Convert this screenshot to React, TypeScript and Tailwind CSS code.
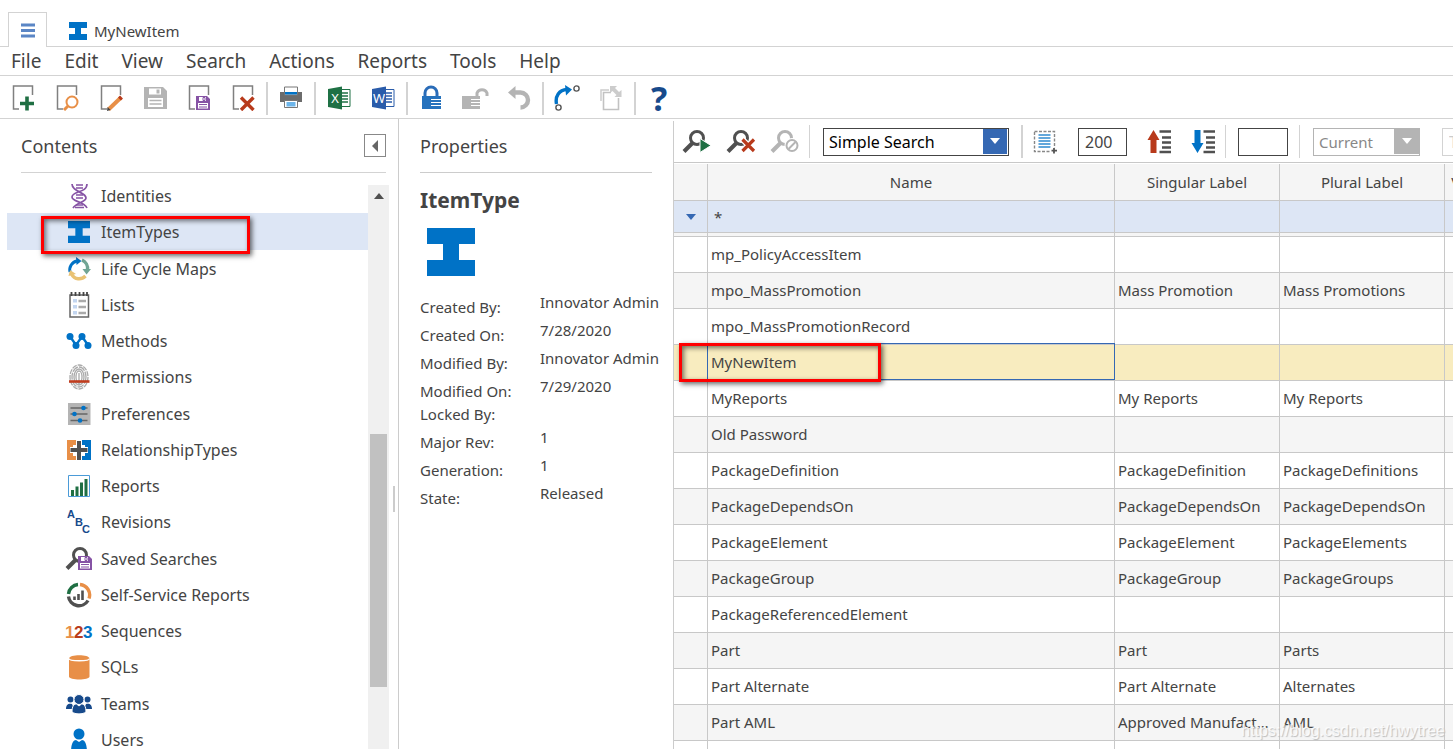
import type { ReactNode } from 'react'

function Svg({ children, w = 24, h = 26 }: { children: ReactNode; w?: number; h?: number }) {
  return (
    <svg width={w} height={h} viewBox={`0 0 ${w} ${h}`} fill="none" aria-hidden="true" className="shrink-0">
      {children}
    </svg>
  )
}

function Page() {
  return <path d="M21.5 10V1H2.5V24H8" stroke="#808080" strokeWidth="1.5" />
}

function Floppy({ color }: { color: string }) {
  return (
    <g>
      <path d="M9 11h11l3 3v11H9z" fill={color} />
      <path d="M12 12h7v4h-7zM11 18h10v5.5H11z" fill="#fff" />
      <path d="M16 12.5h2v3h-2zM12 19.5h8M12 22h8" stroke={color} strokeWidth="1" />
    </g>
  )
}

function Magnifier({ color = '#505050' }: { color?: string }) {
  return (
    <g stroke={color}>
      <circle cx="15" cy="9" r="6.5" strokeWidth="3" />
      <path d="M10.5 14L2 22.5" strokeWidth="4" />
    </g>
  )
}

const NewIcon = () => (
  <Svg>
    <Page />
    <path d="M16 11.5v14M9 18.5h14" stroke="#1f6f43" strokeWidth="3.6" />
  </Svg>
)

const FindIcon = () => (
  <Svg>
    <Page />
    <circle cx="17" cy="17" r="5.5" stroke="#e88f47" strokeWidth="2" />
    <path d="M13 21L9 25" stroke="#e88f47" strokeWidth="3" />
  </Svg>
)

const EditIcon = () => (
  <Svg>
    <Page />
    <path d="M9.5 24.5L22 12.5" stroke="#e88f47" strokeWidth="4" />
    <path d="M20.5 14L22.5 12" stroke="#b83a1b" strokeWidth="4" />
    <path d="M8 26l.6-4 3 3z" fill="#444" />
  </Svg>
)

const SaveIcon = () => (
  <Svg>
    <path d="M1 2h19l4 4v18H1z" fill="#b4b4b4" />
    <path d="M6 3.5h12v6H6zM5 13h15v9H5z" fill="#fff" />
    <path d="M13.5 4.5h3v4h-3z" fill="#b4b4b4" />
    <path d="M6.5 15.5h12M6.5 19h12" stroke="#b4b4b4" strokeWidth="1.5" />
  </Svg>
)

const SaveCloseIcon = () => (
  <Svg>
    <Page />
    <Floppy color="#8653a5" />
  </Svg>
)

const DeleteIcon = () => (
  <Svg>
    <Page />
    <path d="M10 12.5L22.5 25M22.5 12.5L10 25" stroke="#b83a1b" strokeWidth="3.4" />
  </Svg>
)

const PrintIcon = () => (
  <Svg>
    <path d="M1 7h4v3h14V7h4v10H1z" fill="#6c6c6c" />
    <path d="M5.5 2h13v8h-13z" fill="#fff" stroke="#777" />
    <path d="M6 7h12v2.5H6z" fill="#0072c6" />
    <path d="M5.5 15.5h13v7h-13z" fill="#fff" stroke="#777" />
    <path d="M7.5 17h9v4.5h-9z" fill="#6cb5ea" />
  </Svg>
)

function OfficeIcon({ letter, color }: { letter: string; color: string }) {
  return (
    <Svg>
      <path d="M13 4.5h10v17H13z" stroke={color} fill="#fff" />
      <path d="M15 8h6M15 11h6M15 14h6M15 17h6" stroke={color} strokeWidth="1.6" />
      <path d="M1 4l14-2.5v23L1 22z" fill={color} />
      <text x="8" y="18" textAnchor="middle" fontSize="13" fill="#fff" fontFamily="Noto Sans, sans-serif">
        {letter}
      </text>
    </Svg>
  )
}

const LockIcon = () => (
  <Svg>
    <path d="M6 12V8a6 6 0 0 1 12 0v4" stroke="#2a6cb8" strokeWidth="3" />
    <path d="M3 11h19v13H3z" fill="#2672bd" />
    <path d="M12 14.5h10M12 17.5h10M12 20.5h10" stroke="#fff" strokeWidth="1.1" />
  </Svg>
)

const UnlockIcon = () => (
  <Svg w={28}>
    <path d="M16 12V8a5.5 5.5 0 0 1 10 0v3" stroke="#b4b4b4" strokeWidth="3" />
    <path d="M1 11h18v13H1z" fill="#b4b4b4" />
    <path d="M10 14.5h9M10 17.5h9M10 20.5h9" stroke="#fff" strokeWidth="1.1" />
  </Svg>
)

const UndoIcon = () => (
  <Svg>
    <path d="M1 7.5L8.5 1v13z" fill="#b4b4b4" />
    <path d="M7 7.5h6.5a7.5 7.5 0 0 1 0 15" stroke="#b4b4b4" strokeWidth="4.4" />
  </Svg>
)

const PromoteIcon = () => (
  <Svg w={26}>
    <path d="M2.5 19C1 11 5 5 13 4.5" stroke="#0072c6" strokeWidth="3.4" />
    <path d="M11 0l7 4.5-6 6z" fill="#0072c6" />
    <circle cx="22.5" cy="3.5" r="2.6" stroke="#555" strokeWidth="1.4" />
    <circle cx="4.5" cy="22.5" r="2.6" stroke="#555" strokeWidth="1.4" />
  </Svg>
)

const CopyIcon = () => (
  <Svg>
    <path d="M2 16V5h8" stroke="#ccc" strokeWidth="1.5" />
    <path d="M12 7.5H4.5v17h15V13" stroke="#c2c2c2" strokeWidth="1.6" />
    <path d="M11 1h7l-2 2 4 4 2.5-2v7h-7l2-2-4-4-2.5 2z" fill="#ccc" />
  </Svg>
)

const HelpIcon = () => <span className="text-[34px] font-bold leading-[42px] text-[#174a8b]">?</span>

const RunSearchIcon = () => (
  <Svg w={30}>
    <Magnifier />
    <path d="M18 9.5v14l11-7z" fill="#1f6f43" stroke="#fff" />
  </Svg>
)

const ClearSearchIcon = () => (
  <Svg w={30}>
    <Magnifier />
    <path d="M17 11l11 11M28 11L17 22" stroke="#fff" strokeWidth="6" />
    <path d="M16.5 10.5L28 22M28 10.5L16.5 22" stroke="#b83a1b" strokeWidth="3.2" />
  </Svg>
)

const StopSearchIcon = () => (
  <Svg w={30}>
    <Magnifier color="#b4b4b4" />
    <circle cx="22" cy="16.5" r="5.5" fill="#fff" stroke="#fff" strokeWidth="4" />
    <circle cx="22" cy="16.5" r="5.5" stroke="#b4b4b4" strokeWidth="2" />
    <path d="M18.5 20l7-7" stroke="#b4b4b4" strokeWidth="2" />
  </Svg>
)

const SelectAllIcon = () => (
  <Svg>
    <path d="M1.5 2.5h20v20h-20z" stroke="#888" strokeWidth="1.4" strokeDasharray="3 1.5" />
    <path d="M5.5 6h12M5.5 9h12M5.5 12h12M5.5 15h12M5.5 18h12" stroke="#2f8ad0" strokeWidth="1.4" />
    <path d="M17.5 18.5h8v8h-8z" fill="#fff" />
    <path d="M21 19v5.5M18.5 21.7H24" stroke="#555" strokeWidth="1.8" />
  </Svg>
)

function SortIcon({ up }: { up?: boolean }) {
  return (
    <Svg>
      {up ? (
        <path d="M6.5 1l6 10h-3v13h-6V11h-3z" fill="#b83a1b" />
      ) : (
        <path d="M6.5 24l6-10h-3V1h-6v13h-3z" fill="#0072c6" />
      )}
      <path d="M12.5 2.5H24M15 8.5h9M15 13.5h9M15 18.5h9M12.5 23H24" stroke="#505050" strokeWidth="2.4" />
    </Svg>
  )
}

function ItemTypeIcon({ size }: { size: number }) {
  return (
    <svg width={size} height={size} viewBox="0 0 24 24" aria-hidden="true" className="shrink-0">
      <path d="M0 0h24v8h-8v8h8v8H0v-8h8V8H0z" fill="#0072c6" />
    </svg>
  )
}

const treeItems: { label: string; icon: ReactNode }[] = [
  {
    label: 'Identities',
    icon: (
      <Svg>
        <path d="M5 1c0 8 14 8 14 14 0 4-9 4-13 10M20 1c0 9-15 7-15 13 0 5 12 4 15 11" stroke="#8653a5" strokeWidth="1.7" />
        <path d="M9 2h7M9 5h7M9 12h7M9 15h7M9 22h7M8 24.5h9" stroke="#8653a5" strokeWidth="1.3" />
      </Svg>
    ),
  },
  { label: 'ItemTypes', icon: <ItemTypeIcon size={22} /> },
  {
    label: 'Life Cycle Maps',
    icon: (
      <Svg>
        <path d="M3 16a9 9 0 0 1 7-11" stroke="#0072c6" strokeWidth="3" />
        <path d="M9 1l5.5 4-5 4z" fill="#0072c6" />
        <path d="M15 4a9.5 9.5 0 0 1 5.5 10" stroke="#71a594" strokeWidth="3.4" />
        <path d="M15.5 13H24l-4.5 5.5z" fill="#71a594" />
        <path d="M4.5 18c3 6 10 6 14 2" stroke="#e9c273" strokeWidth="3.4" />
        <path d="M1.5 20L3 14l6 4z" fill="#e9c273" />
      </Svg>
    ),
  },
  {
    label: 'Lists',
    icon: (
      <Svg>
        <path d="M3 3h18.5v22H3z" stroke="#666" strokeWidth="1.5" />
        <path d="M4.5 0v4M8.5 0v4M12.5 0v4M16.5 0v4M20 0v4" stroke="#444" strokeWidth="1.8" />
        <path d="M6 7h4v3.5H6zM6 13h4v3.5H6zM6 19h4v3.5H6z" fill="#c3d6f0" />
        <path d="M11.5 9H19M11.5 15H19M11.5 21H19" stroke="#aaa" strokeWidth="2.4" />
      </Svg>
    ),
  },
  {
    label: 'Methods',
    icon: (
      <Svg w={26}>
        <path d="M4 8.5l6 8.5 6-8.5 6 8.5" stroke="#0072c6" strokeWidth="2.4" />
        <g fill="#0072c6">
          <circle cx="4" cy="8.5" r="3.5" />
          <circle cx="10" cy="17.5" r="3.5" />
          <circle cx="16" cy="8.5" r="3.5" />
          <circle cx="22" cy="17.5" r="3.5" />
        </g>
      </Svg>
    ),
  },
  {
    label: 'Permissions',
    icon: (
      <Svg>
        <g stroke="#aaa" strokeWidth="1.3">
          <ellipse cx="12" cy="13" rx="9" ry="12" strokeDasharray="5 1" />
          <ellipse cx="12" cy="13" rx="7" ry="10" strokeDasharray="7 1" />
          <ellipse cx="12" cy="13" rx="5" ry="8" />
          <ellipse cx="12" cy="13" rx="3" ry="6" />
          <path d="M12 9v12" />
        </g>
        <path d="M2 17.5h20.5" stroke="#c03d1e" strokeWidth="2.6" />
      </Svg>
    ),
  },
  {
    label: 'Preferences',
    icon: (
      <Svg>
        <path d="M1 2h22.5v22H1z" fill="#b4b4b4" />
        <path d="M3.5 7h17M3.5 13h17M3.5 19.5h17" stroke="#666" strokeWidth="1.4" />
        <g fill="#0072c6">
          <circle cx="16.5" cy="7" r="2.3" />
          <circle cx="7.5" cy="13" r="2.3" />
          <circle cx="13" cy="19.5" r="2.3" />
        </g>
      </Svg>
    ),
  },
  {
    label: 'RelationshipTypes',
    icon: (
      <Svg w={26}>
        <path d="M1 3h11v5H7v11h5v4H1z" fill="#e88f47" />
        <path d="M14 3h11v20H14v-4h5V8h-5z" fill="#0072c6" />
        <path d="M13 3v20M4 13h18" stroke="#fff" strokeWidth="6" />
        <path d="M13 4v19M4.5 13h17" stroke="#505050" strokeWidth="4" />
      </Svg>
    ),
  },
  {
    label: 'Reports',
    icon: (
      <Svg>
        <path d="M1.5 2.5h21v21h-21z" stroke="#4b9bd8" />
        <path d="M5.5 17v6M10 13.5V23M14.5 9.5V23M19 6v17" stroke="#1f6f43" strokeWidth="3" />
      </Svg>
    ),
  },
  {
    label: 'Revisions',
    icon: (
      <Svg>
        <g fill="#174a8b" fontSize="11" fontWeight="bold" fontFamily="Liberation Sans, Arial, sans-serif">
          <text x="0" y="9">A</text>
          <text x="8" y="17">B</text>
          <text x="15" y="24">C</text>
        </g>
      </Svg>
    ),
  },
  {
    label: 'Saved Searches',
    icon: (
      <Svg w={28}>
        <Magnifier />
        <path d="M13 11h14v14H13z" fill="#fff" />
        <g transform="translate(4 -1)">
          <Floppy color="#8653a5" />
        </g>
      </Svg>
    ),
  },
  {
    label: 'Self-Service Reports',
    icon: (
      <Svg w={26}>
        <path d="M2.5 12A10.5 10.5 0 0 1 12 2.5" stroke="#1f6f43" strokeWidth="3.4" />
        <path d="M14 2.5a10.5 10.5 0 0 1 9 14" stroke="#e88f47" strokeWidth="3.4" />
        <path d="M2.5 14.5A10.5 10.5 0 0 0 22 18.5" stroke="#505050" strokeWidth="3.4" />
        <path d="M8.5 14.5V18M12.5 12v6M16.5 8.5V18" stroke="#505050" strokeWidth="2.6" />
      </Svg>
    ),
  },
  {
    label: 'Sequences',
    icon: (
      <Svg w={28}>
        <g fontSize="17" fontWeight="bold" fontFamily="Liberation Sans, Arial, sans-serif">
          <text x="0" y="20" fill="#e88f47">1</text>
          <text x="9" y="20" fill="#b83a1b">2</text>
          <text x="18" y="20" fill="#0072c6">3</text>
        </g>
      </Svg>
    ),
  },
  {
    label: 'SQLs',
    icon: (
      <Svg>
        <path d="M2 4.5C2 0 22.5 0 22.5 4.5v18c0 4-20.5 4-20.5 0z" fill="#e88f47" />
        <path d="M2 4.5c0 3 20.5 3 20.5 0" stroke="#fff" strokeWidth="1.4" />
      </Svg>
    ),
  },
  {
    label: 'Teams',
    icon: (
      <Svg w={26}>
        <g fill="#174a8b">
          <circle cx="4.5" cy="8.5" r="3" />
          <circle cx="21.5" cy="8.5" r="3" />
          <path d="M0 18c0-5 3-6 6-5l2 5zM26 18c0-5-3-6-6-5l-2 5z" />
          <circle cx="13" cy="8.5" r="5" stroke="#fff" />
          <path d="M6 21c0-6 2-8 4.5-8l2.5 2 2.5-2c2.5 0 4.5 2 4.5 8-3 2.5-11 2.5-14 0z" stroke="#fff" />
        </g>
      </Svg>
    ),
  },
  {
    label: 'Users',
    icon: (
      <Svg>
        <circle cx="12" cy="7" r="5.5" fill="#0072c6" />
        <path d="M4 26c0-9 2-13 5-13l3 2 3-2c3 0 5 4 5 13z" fill="#0072c6" />
      </Svg>
    ),
  },
]

const menus = ['File', 'Edit', 'View', 'Search', 'Actions', 'Reports', 'Tools', 'Help']

const toolGroups: { label: string; icon: ReactNode }[][] = [
  [
    { label: 'New', icon: <NewIcon /> },
    { label: 'Open', icon: <FindIcon /> },
    { label: 'Edit item', icon: <EditIcon /> },
    { label: 'Save', icon: <SaveIcon /> },
    { label: 'Save and close', icon: <SaveCloseIcon /> },
    { label: 'Delete', icon: <DeleteIcon /> },
  ],
  [{ label: 'Print', icon: <PrintIcon /> }],
  [
    { label: 'Export to Excel', icon: <OfficeIcon letter="X" color="#1f7145" /> },
    { label: 'Export to Word', icon: <OfficeIcon letter="W" color="#2a5caa" /> },
  ],
  [
    { label: 'Lock', icon: <LockIcon /> },
    { label: 'Unlock', icon: <UnlockIcon /> },
    { label: 'Undo', icon: <UndoIcon /> },
  ],
  [
    { label: 'Promote', icon: <PromoteIcon /> },
    { label: 'Copy', icon: <CopyIcon /> },
  ],
  [{ label: 'Help topics', icon: <HelpIcon /> }],
]

const properties = [
  ['Created By:', 'Innovator Admin'],
  ['Created On:', '7/28/2020'],
  ['Modified By:', 'Innovator Admin'],
  ['Modified On:', '7/29/2020'],
  ['Locked By:', ''],
  ['Major Rev:', '1'],
  ['Generation:', '1'],
  ['State:', 'Released'],
]

const rows = [
  ['mp_PolicyAccessItem', '', ''],
  ['mpo_MassPromotion', 'Mass Promotion', 'Mass Promotions'],
  ['mpo_MassPromotionRecord', '', ''],
  ['MyNewItem', '', ''],
  ['MyReports', 'My Reports', 'My Reports'],
  ['Old Password', '', ''],
  ['PackageDefinition', 'PackageDefinition', 'PackageDefinitions'],
  ['PackageDependsOn', 'PackageDependsOn', 'PackageDependsOn'],
  ['PackageElement', 'PackageElement', 'PackageElements'],
  ['PackageGroup', 'PackageGroup', 'PackageGroups'],
  ['PackageReferencedElement', '', ''],
  ['Part', 'Part', 'Parts'],
  ['Part Alternate', 'Part Alternate', 'Alternates'],
  ['Part AML', 'Approved Manufacturer', 'AML'],
  ['', '', ''],
]

function ToolButton({ label, children }: { label: string; children: ReactNode }) {
  return (
    <button type="button" aria-label={label} className="flex h-full w-11 shrink-0 items-center justify-center">
      {children}
    </button>
  )
}

function Separator() {
  return <span className="mx-px h-[33px] w-0.5 shrink-0 bg-[#d3d3d3]" />
}

function Header() {
  return (
    <header>
      <div className="flex h-[47px] items-end border-b border-[#d3d3d3] pl-2">
        <button
          type="button"
          aria-label="Main menu"
          className="-mb-px flex h-[35px] w-[39px] items-center justify-center border border-b-0 border-[#d3d3d3] bg-white pt-px"
        >
          <Svg w={14} h={15}>
            <path d="M0 2h14M0 7.5h14M0 13h14" stroke="#5b86c5" strokeWidth="3" />
          </Svg>
        </button>
        <button type="button" className="ml-[22px] flex h-[31px] items-center gap-[7px] text-[15px]">
          <ItemTypeIcon size={18} />
          MyNewItem
        </button>
      </div>
      <nav className="flex h-[29px] items-center gap-[23px] border-b border-[#d3d3d3] pl-[11px] text-[19px]">
        {menus.map((m) => (
          <button key={m} type="button" className="leading-7">
            {m}
          </button>
        ))}
      </nav>
      <div className="flex h-[43px] items-center border-b border-[#d3d3d3] pl-px pt-0.5">
        {toolGroups.map((group, i) => (
          <div key={i} className="flex h-full items-center">
            {i > 0 && <Separator />}
            {group.map((t) => (
              <ToolButton key={t.label} label={t.label}>
                {t.icon}
              </ToolButton>
            ))}
          </div>
        ))}
      </div>
    </header>
  )
}

function Contents() {
  return (
    <aside className="flex w-[399px] shrink-0 border-r border-[#ccc]">
      <div className="flex w-[389px] flex-col">
        <div className="ml-[21px] mr-[3px] flex h-[54px] shrink-0 items-center justify-between border-b border-[#d3d3d3]">
          <h2 className="text-[18px]">Contents</h2>
          <button
            type="button"
            aria-label="Collapse"
            className="flex h-[23px] w-[22px] items-center justify-center border border-[#888]"
          >
            <Svg w={8} h={12}>
              <path d="M7 0v12L1 6z" fill="#666" />
            </Svg>
          </button>
        </div>
        <div className="flex min-h-0 flex-1">
          <ul className="mt-1 grid h-[580px] flex-1 auto-rows-fr pl-[7px]">
            {treeItems.map((item) => (
              <li key={item.label} className={item.label === 'ItemTypes' ? 'relative bg-[#dde6f5]' : ''}>
                <a href="#" className="flex h-full items-center pl-[58px] pt-0.5">
                  <span className="flex w-7 justify-center">{item.icon}</span>
                  <span className="pl-2">{item.label}</span>
                </a>
                {item.label === 'ItemTypes' && (
                  <span className="absolute left-[34px] top-[3px] h-[38px] w-[209px] border-3 border-[#f00] shadow-[2px_2px_5px_#0009,inset_2px_2px_5px_#0008]" />
                )}
              </li>
            ))}
          </ul>
          <div className="mt-3 w-[21px] bg-[#f0f0f0] px-0.5">
            <div className="flex h-[249px] justify-center pt-2">
              <Svg w={10} h={6}>
                <path d="M0 6h10L5 0z" fill="#505050" />
              </Svg>
            </div>
            <div className="h-[253px] bg-[#c1c1c1]" />
          </div>
        </div>
      </div>
      <div className="flex-1 pl-1 pt-[367px]">
        <div className="h-[26px] w-0.5 bg-[#ccc]" />
      </div>
    </aside>
  )
}

function Properties() {
  return (
    <section className="w-[274px] shrink-0 pl-[21px] text-[15px]">
      <h2 className="mr-[21px] flex h-[54px] items-center border-b border-[#ccc] text-[18px]">Properties</h2>
      <h3 className="pt-[11px] text-[21px] font-bold leading-8">ItemType</h3>
      <div className="px-[7px] pt-3">
        <ItemTypeIcon size={48} />
      </div>
      <dl className="mt-[17px]">
        {properties.map(([label, value]) => (
          <div key={label} className={value ? 'flex h-7' : 'flex h-[23px]'}>
            <dt className={value ? 'w-[120px] shrink-0 leading-7' : 'w-[120px] shrink-0 leading-[18px]'}>{label}</dt>
            <dd className="whitespace-nowrap leading-[18px]">{value}</dd>
          </div>
        ))}
      </dl>
    </section>
  )
}

function SearchBar() {
  return (
    <div className="flex h-[42px] items-center overflow-hidden border-b border-[#c8c8c8] pl-px">
      <ToolButton label="Run search">
        <RunSearchIcon />
      </ToolButton>
      <ToolButton label="Clear search">
        <ClearSearchIcon />
      </ToolButton>
      <ToolButton label="Stop search">
        <StopSearchIcon />
      </ToolButton>
      <span className="ml-0.5 h-[33px] w-px shrink-0 bg-[#d3d3d3]" />
      <div className="relative ml-[13px] h-7 w-[186px] shrink-0">
        <select
          aria-label="Search type"
          defaultValue="Simple Search"
          className="h-full w-full appearance-none border border-[#444] bg-white pl-[5px] text-black"
        >
          <option>Simple Search</option>
        </select>
        <span className="pointer-events-none absolute right-0.5 top-px flex h-[25px] w-[24px] items-center justify-center bg-[#3568b3]">
          <Svg w={10} h={6}>
            <path d="M0 0h10L5 6z" fill="#fff" />
          </Svg>
        </span>
      </div>
      <span className="ml-3 h-[33px] w-0.5 shrink-0 bg-[#d3d3d3]" />
      <ToolButton label="Select all">
        <SelectAllIcon />
      </ToolButton>
      <input
        aria-label="Page size"
        defaultValue="200"
        className="ml-[11px] h-7 w-[49px] shrink-0 border border-[#444] pl-[6px]"
      />
      <span className="w-[10px] shrink-0" />
      <ToolButton label="Previous page">
        <SortIcon up />
      </ToolButton>
      <ToolButton label="Next page">
        <SortIcon />
      </ToolButton>
      <span className="h-[33px] w-px shrink-0 bg-[#d3d3d3]" />
      <input aria-label="Page" className="ml-3 h-7 w-[50px] shrink-0 border border-[#444] px-1" />
      <span className="ml-[11px] h-[33px] w-px shrink-0 bg-[#d3d3d3]" />
      <div className="relative ml-[13px] h-7 w-[107px] shrink-0">
        <select
          aria-label="Version"
          defaultValue="Current"
          className="h-full w-full appearance-none border border-[#b4b4b4] bg-white pl-[5px] text-[15px] text-[#888]"
        >
          <option>Current</option>
        </select>
        <span className="pointer-events-none absolute right-px top-px flex h-[25px] w-[25px] items-center justify-center bg-[#b4b4b4]">
          <Svg w={10} h={6}>
            <path d="M0 0h10L5 6z" fill="#fff" />
          </Svg>
        </span>
      </div>
      <input
        aria-label="Effective date"
        defaultValue="Today"
        className="ml-[22px] h-7 w-[140px] shrink-0 border border-[#d3d3d3] pl-[6px] text-[#ccc]"
      />
    </div>
  )
}

const cell = 'border-b border-r border-[#c8c8c8]'
const textCell = 'border-b border-r border-[#c8c8c8] pb-0.5 pl-[3px]'

function Grid() {
  return (
    <main className="mt-0.5 min-w-0 flex-1 overflow-hidden border-l border-[#ccc]">
      <SearchBar />
      <table className="mt-px w-[867px] table-fixed border-separate border-spacing-0 text-left text-[15px]">
        <colgroup>
          <col className="w-[34px]" />
          <col className="w-[407px]" />
          <col className="w-[165px]" />
          <col className="w-[165px]" />
          <col className="w-24" />
        </colgroup>
        <thead>
          <tr className="h-[37px] bg-[#f5f5f5] text-center">
            <th className={cell} />
            <th className={`${cell} font-normal`}>Name</th>
            <th className={`${cell} font-normal`}>Singular Label</th>
            <th className={`${cell} font-normal`}>Plural Label</th>
            <th className={`${cell} font-normal`}>Versionable</th>
          </tr>
          <tr className="h-8 bg-[#dde6f5]">
            <td className={cell}>
              <span className="flex justify-center">
                <Svg w={10} h={6}>
                  <path d="M0 0h10L5 6z" fill="#3568b3" />
                </Svg>
              </span>
            </td>
            <td className={`${cell} pl-[6px]`}>*</td>
            <td className={cell} />
            <td className={cell} />
            <td className={cell} />
          </tr>
          <tr className="h-1 bg-[#f5f5f5]">
            <td className={cell} />
            <td className={cell} />
            <td className={cell} />
            <td className={cell} />
            <td className={cell} />
          </tr>
        </thead>
        <tbody>
          {rows.map(([name, singular, plural], i) => {
            const selected = name === 'MyNewItem'
            return (
              <tr key={i} className={selected ? 'h-9 bg-[#f8ecbf]' : i % 2 ? 'h-9 bg-[#f5f5f5]' : 'h-9'}>
                <td className={cell} />
                <td className={`${textCell} relative`}>
                  {name}
                  {selected && (
                    <>
                      <span className="absolute -left-px -right-px -top-0.5 bottom-0 border border-[#3568b3]" />
                      <span className="absolute -left-[29px] -top-0.5 h-[39px] w-[202px] border-3 border-[#f00] shadow-[2px_2px_5px_#0009,inset_2px_2px_5px_#0008]" />
                    </>
                  )}
                </td>
                <td className={`${textCell} truncate pr-[3px]`}>{singular}</td>
                <td className={`${textCell} truncate pr-[3px]`}>{plural}</td>
                <td className={cell} />
              </tr>
            )
          })}
        </tbody>
      </table>
    </main>
  )
}

export default function App() {
  return (
    <div className="relative flex h-screen flex-col overflow-hidden bg-white font-['Noto_Sans',sans-serif] text-[16px] leading-5 text-[#444]">
      <Header />
      <div className="flex min-h-0 flex-1">
        <Contents />
        <Properties />
        <Grid />
      </div>
      <span className="pointer-events-none absolute bottom-2 right-2 font-['Liberation_Sans',Arial,sans-serif] text-[16px] text-white/80 [text-shadow:1px_1px_1px_#bbb]">
        https://blog.csdn.net/hwytree
      </span>
    </div>
  )
}
